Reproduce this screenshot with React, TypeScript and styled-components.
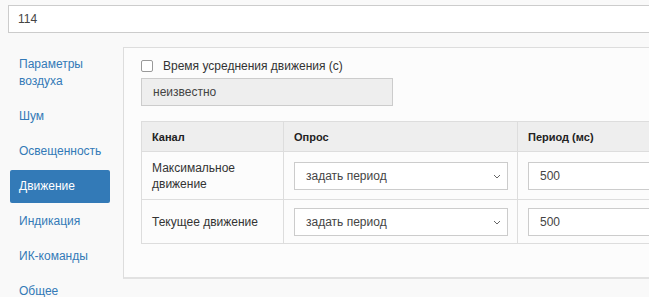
import React from "react";
import styled, { createGlobalStyle } from "styled-components";

const Global = createGlobalStyle`
  html, body { margin: 0; padding: 0; background: #f9f9f9; overflow: hidden; }
  body { font-family: "Liberation Sans", Arial, sans-serif; font-size: 12px; color: #333; }
  * { box-sizing: border-box; }
`;

const Page = styled.div`
  width: 1000px;
  padding: 5px 0 0 8px;
`;

const TopInput = styled.div`
  height: 28px;
  width: 900px;
  border: 1px solid #ccc;
  background: #fff;
  padding: 0 9px;
  display: flex;
  align-items: center;
  font-size: 12px;
  color: #444;
`;

const Body = styled.div`
  display: flex;
  margin-top: 14px;
  align-items: flex-start;
`;

const Sidebar = styled.nav`
  width: 100px;
  margin: 1px 0 0 2px;
  display: flex;
  flex-direction: column;
  gap: 2px;
`;

const NavItem = styled.div<{ $active?: boolean }>`
  padding: 8px 9px;
  line-height: 17px;
  font-size: 12px;
  border-radius: 2px;
  color: ${(p) => (p.$active ? "#fff" : "#337ab7")};
  background: ${(p) => (p.$active ? "#337ab7" : "transparent")};
`;

const Panel = styled.section`
  margin-left: 13px;
  width: 800px;
  background: #fcfcfc;
  border: 1px solid #ddd;
  border-bottom: 2px solid #e2e2e2;
  padding: 10px 17px 33px;
`;

const CheckRow = styled.label`
  display: flex;
  align-items: center;
  gap: 10px;
  height: 13px;
  margin-bottom: 6px;
  margin-top: 1px;
`;

const Box = styled.span`
  width: 12px;
  height: 12px;
  border: 1px solid #999;
  border-radius: 2px;
  background: #fff;
`;

const ReadOnly = styled.div`
  width: 252px;
  height: 28px;
  background: #eee;
  border: 1px solid #ccc;
  display: flex;
  align-items: center;
  padding: 0 11px;
  color: #444;
`;

const Table = styled.table`
  margin-top: 15px;
  border-collapse: collapse;
  width: 600px;
  table-layout: fixed;
`;

const Th = styled.th<{ $w: number }>`
  width: ${(p) => p.$w}px;
  background: #eee;
  border: 1px solid #ddd;
  text-align: left;
  font-size: 11px;
  font-weight: bold;
  height: 30px;
  padding: 0 10px;
  color: #222;
`;

const Td = styled.td`
  border: 1px solid #ddd;
  padding: 8px 10px 7px;
  line-height: 16px;
  font-size: 12px;
  vertical-align: middle;
`;

const Select = styled.div`
  height: 28px;
  width: 214px;
  border: 1px solid #ccc;
  background: #fff;
  display: flex;
  align-items: center;
  justify-content: space-between;
  padding: 0 6px 0 11px;
  color: #444;
`;

const NumInput = styled.div`
  height: 28px;
  width: 300px;
  border: 1px solid #ccc;
  background: #fff;
  display: flex;
  align-items: center;
  padding: 0 11px;
  color: #444;
`;

const Chevron = () => (
  <svg width="8" height="5" viewBox="0 0 8 5">
    <path d="M1 1 L4 4 L7 1" fill="none" stroke="#666" strokeWidth="1" />
  </svg>
);

const rows = ["Максимальное движение", "Текущее движение"];
const nav = ["Параметры воздуха", "Шум", "Освещенность", "Движение", "Индикация", "ИК-команды", "Общее"];

export default function App() {
  return (
    <>
      <Global />
      <Page>
        <TopInput>114</TopInput>
        <Body>
          <Sidebar>
            {nav.map((n) => (
              <NavItem key={n} $active={n === "Движение"}>
                {n}
              </NavItem>
            ))}
          </Sidebar>
          <Panel>
            <CheckRow>
              <Box />
              Время усреднения движения (с)
            </CheckRow>
            <ReadOnly>неизвестно</ReadOnly>
            <Table>
              <thead>
                <tr>
                  <Th $w={142}>Канал</Th>
                  <Th $w={234}>Опрос</Th>
                  <Th $w={224}>Период (мс)</Th>
                </tr>
              </thead>
              <tbody>
                {rows.map((r) => (
                  <tr key={r}>
                    <Td>{r}</Td>
                    <Td>
                      <Select>
                        задать период
                        <Chevron />
                      </Select>
                    </Td>
                    <Td>
                      <NumInput>500</NumInput>
                    </Td>
                  </tr>
                ))}
              </tbody>
            </Table>
          </Panel>
        </Body>
      </Page>
    </>
  );
}
